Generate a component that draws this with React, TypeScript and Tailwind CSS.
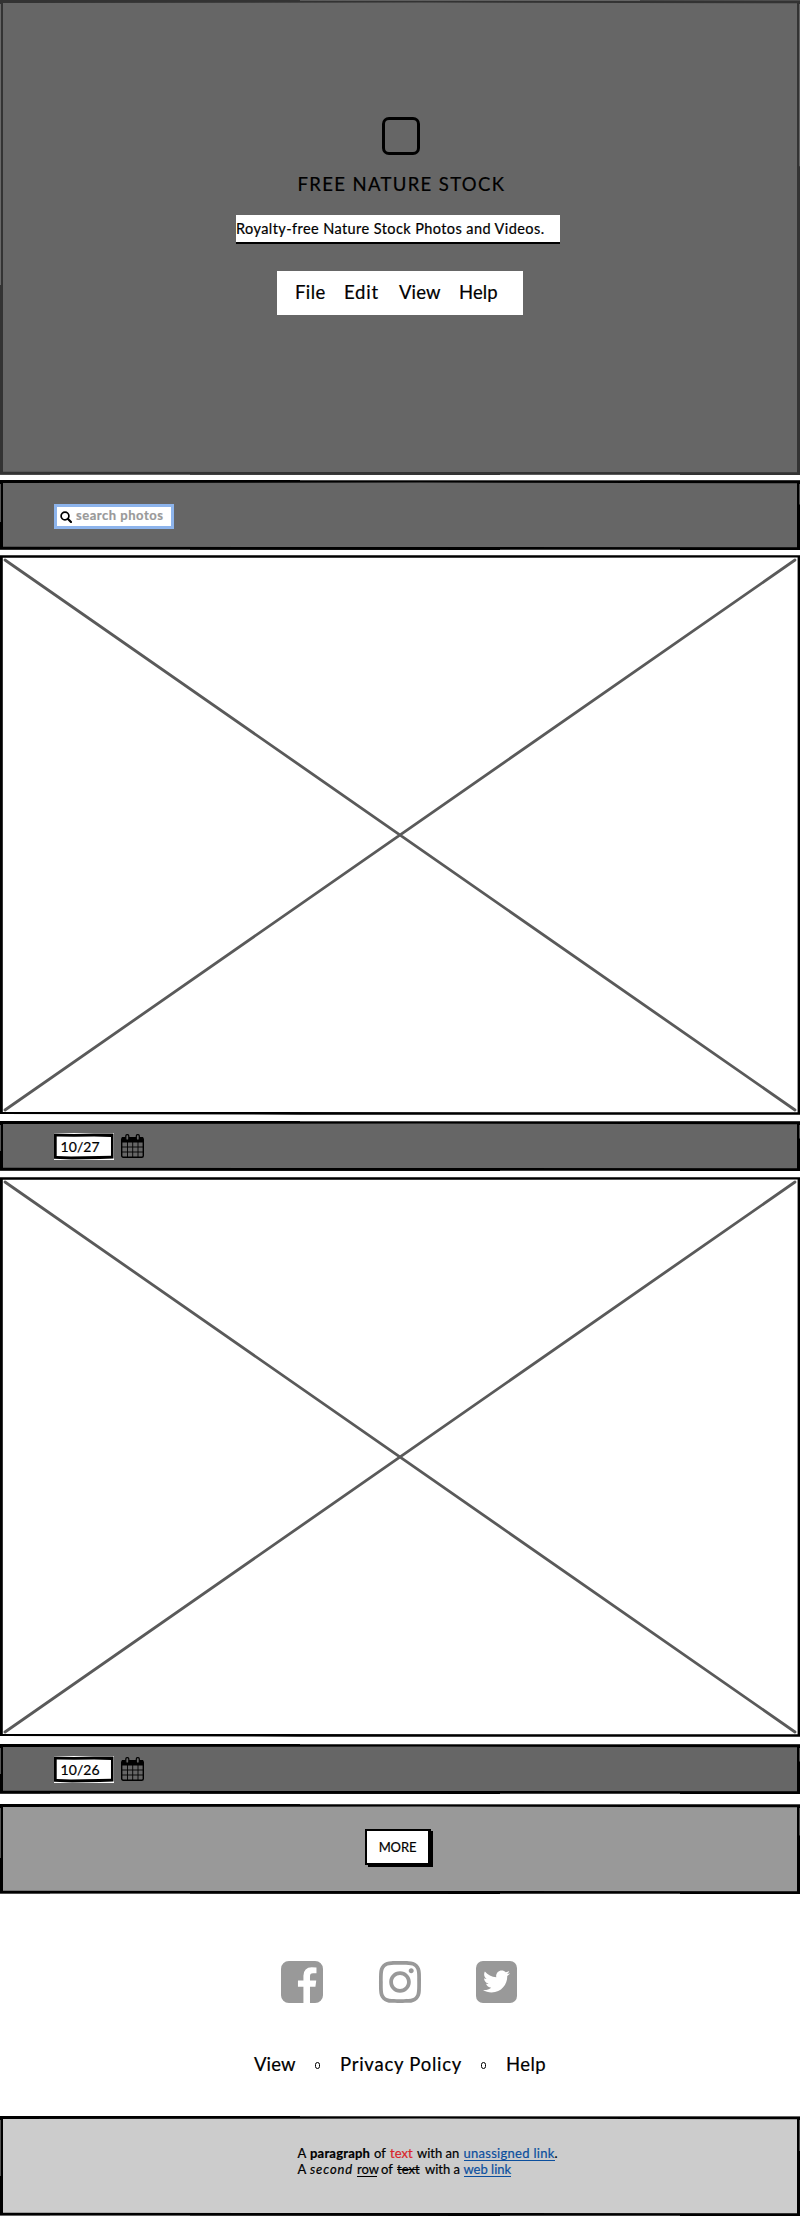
import type { ReactNode } from "react";
import { FaInstagram, FaTwitter } from "react-icons/fa";

function SketchFrame({ h, color = "#000" }: { h: number; color?: string }) {
  return (
    <svg className="absolute inset-0 h-full w-full" viewBox={`0 0 800 ${h}`} aria-hidden="true">
      <path
        d={`M0 0H144L800 .4V${h}H480L0 ${h - 0.5}ZM3 3V${h - 3.2}L797 ${h - 2.8}V3.2L420 2.6Z`}
        fill={color}
        fillRule="evenodd"
      />
      <path d={`M.4 4V${h * 0.6}M799.7 4V${h * 0.35}`} stroke="#888" strokeWidth=".7" />
      <path d={`M50 ${h - 0.3}H190M500 ${h - 0.3}H680M300 .3H640`} stroke="#888" strokeWidth=".6" />
    </svg>
  );
}

function Panel({ className, h, color, children }: { className: string; h: number; color?: string; children?: ReactNode }) {
  return (
    <section className={`relative w-full shrink-0 ${className}`}>
      <SketchFrame h={h} color={color} />
      <div className="relative h-full">{children}</div>
    </section>
  );
}

function ImagePlaceholder({ className }: { className: string }) {
  return (
    <div className={`h-[560px] w-full shrink-0 ${className}`}>
      <svg className="h-full w-full" viewBox="0 0 800 560" aria-hidden="true">
        <path d="M5 5L795 555M795 5L5 555" stroke="#5a5a5a" strokeWidth="2.8" strokeLinecap="round" />
        <path d="M0 .3H800V559.7H300L0 559ZM2.8 2.8V557L797.6 557.2V2.6Z" fill="#000" fillRule="evenodd" />
      </svg>
    </div>
  );
}

function Calendar() {
  return (
    <svg className="ml-[7px] h-6 w-[23px]" viewBox="0 0 23 24" aria-hidden="true">
      <rect x=".7" y="3.7" width="21.6" height="19.6" rx="1.5" fill="none" stroke="#000" strokeWidth="1.4" />
      <path d="M1 3H22V8.5H1Z" />
      <path d="M1 13H22M1 18H22M6.5 8V23M11.7 8V23M17 8V23" stroke="#000" strokeWidth=".9" />
      <rect x="4.8" y=".7" width="3" height="5.4" rx="1.2" fill="#666" stroke="#000" strokeWidth="1.2" />
      <rect x="15.3" y=".7" width="3" height="5.4" rx="1.2" fill="#666" stroke="#000" strokeWidth="1.2" />
    </svg>
  );
}

function DateRow({ date }: { date: string }) {
  return (
    <div className="flex pt-3 pl-[54px]">
      <div className="relative h-[27px] w-[60px] bg-white">
        <svg className="absolute inset-0 h-full w-full" viewBox="0 0 60 27" aria-hidden="true">
          <path
            d="M0 .6L20 1L40 .4L59.500 .6V25.500L46 26L18 26.500L0 25.800ZM2.700 3.600V23L17 23.400L45 23L57 22.800V4L40 3.500L20 3.800Z"
            fillRule="evenodd"
          />
        </svg>
        <span className="relative block pl-[6.5px] text-[14px] leading-[27px] tracking-[0.1px]">{date}</span>
      </div>
      <div className="pt-[1px]">
        <Calendar />
      </div>
    </div>
  );
}

export default function App() {
  return (
    <main className="flex h-[2224px] w-[800px] flex-col overflow-hidden bg-white font-['Lato',sans-serif] text-black [-webkit-text-stroke:0.2px]">
      <Panel className="h-[475px] bg-[#666]" h={475} color="#333">
        <header className="flex flex-col items-center">
          <div className="mt-[117px] ml-0.5 h-[38px] w-[38px] rounded-[7px] border-[3px] border-black" />
          <h1 className="mt-[17px] h-6 w-[205px] text-[18.5px] leading-6 tracking-[1.35px] whitespace-nowrap">FREE NATURE STOCK</h1>
          <p className="mt-[19px] mr-1 h-[29px] w-[324px] border-b-2 border-black bg-white text-[14.5px] leading-[28px] tracking-[0.42px] whitespace-nowrap">
            Royalty-free Nature Stock Photos and Videos.
          </p>
          <nav className="mt-[27px] flex h-11 w-[246px] bg-white pl-[18px] text-[18.5px] leading-[43px] whitespace-nowrap">
            <a className="w-[49px] tracking-[0.4px]">File</a>
            <a className="w-[55px] tracking-[0.8px]">Edit</a>
            <a className="w-[60px] tracking-[0.1px]">View</a>
            <a className="tracking-[0.1px]">Help</a>
          </nav>
        </header>
      </Panel>

      <Panel className="mt-[5px] h-[70px] bg-[#666]" h={70}>
        <div className="flex pt-6 pl-[54px]">
          <label className="flex h-[25px] w-[120px] items-center border-[3px] border-[#8db4ec] bg-white pl-[3px]">
            <svg className="h-3 w-3" viewBox="0 0 12 12" aria-hidden="true">
              <circle cx="5" cy="5" r="3.9" fill="none" stroke="#000" strokeWidth="1.7" />
              <path d="M7.8 7.8L11 11" stroke="#000" strokeWidth="2.2" strokeLinecap="round" />
            </svg>
            <span className="-mt-0.5 ml-1 text-[13px] leading-none font-bold tracking-[0.52px] whitespace-nowrap text-[#999]">search photos</span>
          </label>
        </div>
      </Panel>

      <ImagePlaceholder className="mt-[5px]" />
      <Panel className="mt-1.5 h-[50px] bg-[#666]" h={50}>
        <DateRow date="10/27" />
      </Panel>
      <ImagePlaceholder className="mt-1.5" />
      <Panel className="mt-[7px] h-[50px] bg-[#666]" h={50}>
        <DateRow date="10/26" />
      </Panel>

      <Panel className="mt-2.5 h-[90px] bg-[#999]" h={90}>
        <div className="flex pt-[25px] pl-[365px]">
          <button className="h-9 w-[65px] border-2 border-black bg-white text-[13px] leading-8 tracking-[-0.1px] shadow-[1px_0_0_#000,3px_2px_0_#000] whitespace-nowrap">
            MORE
          </button>
        </div>
      </Panel>

      <div className="mt-[67px] flex h-[42px] pl-[280.5px] text-[#999]">
        <svg className="h-[42px] w-[42px]" viewBox="0 128 1536 1536" fill="currentColor" aria-label="Facebook">
          <path d="M1248 128q119 0 203.500 84.500t84.500 203.500v960q0 119-84.500 203.500t-203.500 84.500h-188v-595h199l30-232h-229v-148q0-56 23.500-84t91.500-28l122-1v-207q-63-9-178-9-136 0-217.500 80t-81.500 226v171h-200v232h200v595h-532q-119 0-203.500-84.500t-84.500-203.500v-960q0-119 84.500-203.500t203.500-84.500z" />
        </svg>
        <FaInstagram className="-mt-[3px] ml-[53.500px] h-12 w-12" />
        <div className="ml-[51.500px] flex h-[41.500px] w-[41.500px] items-center justify-center rounded-[7px] bg-[#999]">
          <FaTwitter className="h-[27px] w-[27px] text-white" />
        </div>
      </div>

      <nav className="mt-[47px] mb-px flex h-7 items-center pl-[254px] text-[18.5px] leading-7 whitespace-nowrap">
        <a className="w-[61px] tracking-[0.1px]">View</a>
        <span className="mt-[3px] h-[7px] w-[5px] rounded-full border border-black" />
        <a className="ml-5 w-[141px] tracking-[0.75px]">Privacy Policy</a>
        <span className="mt-[3px] h-[7px] w-[5px] rounded-full border border-black" />
        <a className="ml-5 tracking-[0.4px]">Help</a>
      </nav>

      <Panel className="mt-[37px] h-[100px] bg-[#ccc]" h={100}>
        <div className="pt-[29px] pl-[297.5px] text-[13px] leading-4 whitespace-nowrap">
          <p className="flex h-4">
            <span className="w-[12.5px]">A</span>
            <b className="w-16 tracking-[0.2px]">paragraph</b>
            <span className="w-4">of</span>
            <span className="w-[27px] text-[#d9252a]">text</span>
            <span className="w-[46.5px]">with an</span>
            <a className="h-4 border-b border-[#0b4f9e] tracking-[0.28px] text-[#0b4f9e]">unassigned link</a>
            <span>.</span>
          </p>
          <p className="flex h-4">
            <span className="w-[12.5px]">A</span>
            <i className="w-[47px] tracking-[0.9px]">second</i>
            <span className="mr-1 h-4 w-5 border-b border-black">row</span>
            <span className="w-4">of</span>
            <s className="w-7">text</s>
            <span className="w-[38.5px]">with a</span>
            <a className="h-4 border-b border-[#0b4f9e] text-[#0b4f9e]">web link</a>
          </p>
        </div>
      </Panel>
    </main>
  );
}
